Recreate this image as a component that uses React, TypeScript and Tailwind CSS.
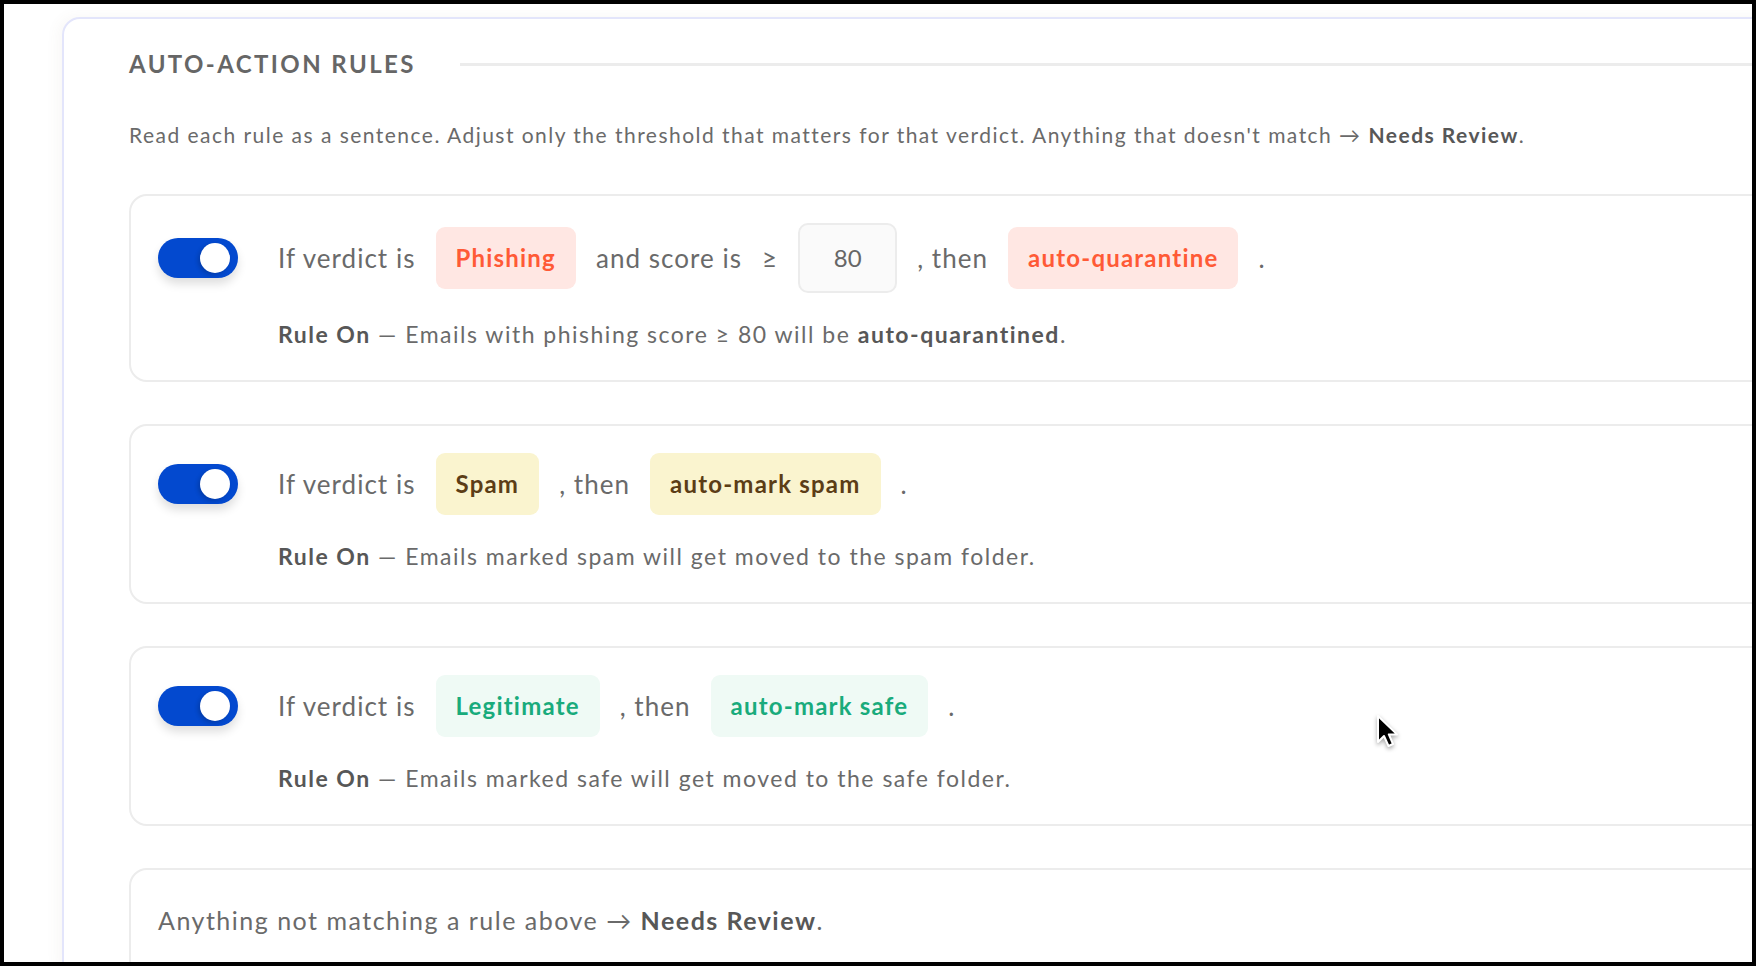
import type { ReactNode } from "react";

type Tone = "red" | "yellow" | "green";

interface Rule {
  id: string;
  verdict: string;
  tone: Tone;
  threshold?: number;
  action: string;
  note: ReactNode;
}

// chip colours per verdict tone
const toneClass: Record<Tone, string> = {
  red: "bg-[#ffe7e3] text-[#ff5a36]",
  yellow: "bg-[#faf4cf] text-[#5c3d16]",
  green: "bg-[#effaf5] text-[#19ab7c]",
};

const rules: Rule[] = [
  {
    id: "phishing",
    verdict: "Phishing",
    tone: "red",
    threshold: 80,
    action: "auto-quarantine",
    note: (
      <>
        Emails with phishing score ≥ 80 will be{" "}
        <b className="font-bold text-[#575757]">auto-quarantined</b>.
      </>
    ),
  },
  {
    id: "spam",
    verdict: "Spam",
    tone: "yellow",
    action: "auto-mark spam",
    note: <>Emails marked spam will get moved to the spam folder.</>,
  },
  {
    id: "legit",
    verdict: "Legitimate",
    tone: "green",
    action: "auto-mark safe",
    note: <>Emails marked safe will get moved to the safe folder.</>,
  },
];

function Toggle() {
  return (
    <button
      type="button"
      aria-pressed
      className="relative h-10 w-20 shrink-0 rounded-full bg-[#0349cf] shadow-[0_6px_10px_rgba(0,0,0,0.13)]"
    >
      <span className="absolute right-2 top-[5px] h-[30px] w-[30px] rounded-full bg-white shadow-[-2px_2px_4px_rgba(0,0,0,0.18)]" />
    </button>
  );
}

function Chip({ tone, children }: { tone: Tone; children: ReactNode }) {
  return (
    <span
      className={`flex h-[62px] items-center rounded-[9px] px-5 text-[24px] font-bold tracking-[0.05em] ${toneClass[tone]}`}
    >
      {children}
    </span>
  );
}

function RuleCard({ rule }: { rule: Rule }) {
  return (
    <div className="grid grid-cols-[80px_1fr] items-center gap-x-10 rounded-[18px] border-2 border-[#ececec] bg-white pb-[31px] pl-[27px] pt-[27px]">
      <Toggle />
      <div className="flex min-h-[62px] items-center gap-5 text-[26px] tracking-[0.04em] text-[#6a6a6a]">
        <span>If verdict is</span>
        <Chip tone={rule.tone}>{rule.verdict}</Chip>
        {rule.threshold !== undefined && (
          <>
            <span>and score is</span>
            <span>≥</span>
            <span className="flex h-[70px] w-[99px] items-center justify-center rounded-[10px] border-2 border-[#ececec] bg-[#fafafa] text-[24px] tracking-normal text-[#666]">
              {rule.threshold}
            </span>
          </>
        )}
        <span>, then</span>
        <Chip tone={rule.tone}>{rule.action}</Chip>
        <span>.</span>
      </div>
      <p className="col-start-2 mt-[26px] text-[23px] leading-[30px] tracking-[0.065em] text-[#6a6a6a]">
        <b className="font-bold text-[#575757]">Rule On</b> — {rule.note}
      </p>
    </div>
  );
}

function Cursor() {
  return (
    <svg
      className="pointer-events-none absolute left-[1368px] top-[706px] drop-shadow-[0_2px_2px_rgba(0,0,0,0.35)]"
      width="28"
      height="40"
      viewBox="0 0 28 40"
    >
      <path
        d="M6 6 L6 32 L12 26 L16.5 36 L21 34 L16.8 24.4 L25 24.4 Z"
        fill="#000"
        stroke="#fff"
        strokeWidth="2"
        strokeLinejoin="round"
      />
    </svg>
  );
}

export default function App() {
  return (
    <div className="h-[966px] w-[1756px] bg-black p-1 font-['Lato',sans-serif]">
      <div className="relative h-full w-full overflow-hidden bg-white">
        <section className="ml-[58px] mt-[13px] w-[1820px] rounded-[18px] border-2 border-[#e3e5fb] bg-white pl-[65px] pt-[29px] shadow-[-4px_0_14px_rgba(120,90,80,0.05)]">
          <div className="flex items-center gap-11">
            <h2 className="text-[24px] font-bold uppercase leading-8 tracking-[0.1em] text-[#666]">
              Auto-Action Rules
            </h2>
            <div className="h-[3px] flex-1 bg-[#ececec]" />
          </div>
          <p className="mt-[41px] text-[21px] leading-7 tracking-[0.07em] text-[#6a6a6a]">
            Read each rule as a sentence. Adjust only the threshold that matters
            for that verdict. Anything that doesn't match →{" "}
            <b className="font-bold text-[#575757]">Needs Review</b>.
          </p>

          <div className="mt-[45px] flex flex-col gap-[42px]">
            {rules.map((rule) => (
              <RuleCard key={rule.id} rule={rule} />
            ))}
            <div className="rounded-[18px] border-2 border-[#ececec] bg-white pb-10 pl-[27px] pt-[34px] text-[25px] leading-8 tracking-[0.06em] text-[#6a6a6a]">
              Anything not matching a rule above →{" "}
              <b className="font-bold text-[#575757]">Needs Review</b>.
            </div>
          </div>
        </section>
        <Cursor />
      </div>
    </div>
  );
}
